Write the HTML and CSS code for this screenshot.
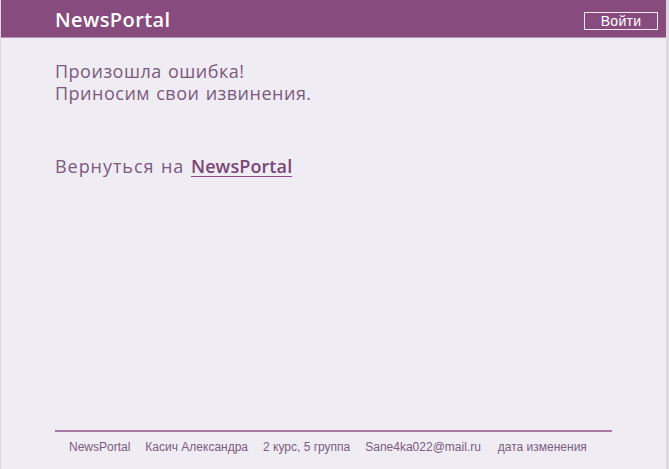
FILE: index.html
```html
<!DOCTYPE html>
<html lang="ru">
<head>
<meta charset="utf-8">
<title>NewsPortal</title>
<link rel="stylesheet" href="styles.css">
</head>
<body>
<div class="page">
  <header class="header">
    <div class="logo">NewsPortal</div>
    <button class="login">Войти</button>
  </header>
  <main class="main">
    <p class="error">Произошла ошибка!<br>Приносим свои извинения.</p>
    <p class="back">Вернуться на <a href="#" class="back-link">NewsPortal</a></p>
  </main>
  <footer class="footer">
    <span class="f-item">NewsPortal</span>
    <span class="f-item">Касич Александра</span>
    <span class="f-item">2 курс, 5 группа</span>
    <span class="f-item f-email">Sane4ka022@mail.ru</span>
    <span class="f-item">дата изменения</span>
  </footer>
</div>
</body>
</html>
```

FILE: styles.css
```css
html, body {
  margin: 0;
  padding: 0;
  height: 100%;
}
body {
  background: #efecf3;
}
.page {
  box-sizing: border-box;
  height: 100vh;
  display: flex;
  flex-direction: column;
  border-left: 1px solid #dcd8e0;
  border-right: 3px solid #dcd8e0;
  background: #efecf3;
  font-family: "Open Sans", sans-serif;
}
.header {
  height: 37px;
  background: #884b7e;
  border-bottom: 1px solid #b98fb2;
  display: flex;
  align-items: center;
  justify-content: space-between;
  padding: 0 8px 0 54px;
  box-sizing: content-box;
}
.logo {
  color: #ffffff;
  font-size: 20px;
  font-weight: 600;
  line-height: 24px;
  letter-spacing: 0.4px;
  margin-top: 2px;
}
.login {
  width: 74px;
  height: 18px;
  margin-top: 4px;
  background: transparent;
  border: 1px solid #f1e6ef;
  color: #ffffff;
  font-family: "Liberation Sans", Arial, sans-serif;
  font-size: 14px;
  line-height: 14px;
  letter-spacing: 0.3px;
  padding: 0;
}
.main {
  padding: 0 54px;
  color: #7b5a7e;
  font-size: 18px;
  line-height: 22px;
  letter-spacing: 0.5px;
  word-spacing: 1px;
}
.error {
  margin: 22px 0 0;
}
.back {
  margin: 51px 0 0;
  letter-spacing: 0.95px;
}
.back-link {
  color: #7a4677;
  font-weight: 600;
  letter-spacing: 0.1px;
  text-decoration: underline;
  text-decoration-color: #8c4c87;
  text-underline-offset: 3px;
}
.footer {
  margin: auto 54px 0;
  border-top: 2px solid #a97ba3;
  padding: 8px 0 15px 14px;
  display: flex;
  gap: 15px;
  font-family: "Liberation Sans", Arial, sans-serif;
  font-size: 12px;
  line-height: 14px;
  color: #7b5c80;
}
.f-email {
  margin-right: 2px;
}
```
